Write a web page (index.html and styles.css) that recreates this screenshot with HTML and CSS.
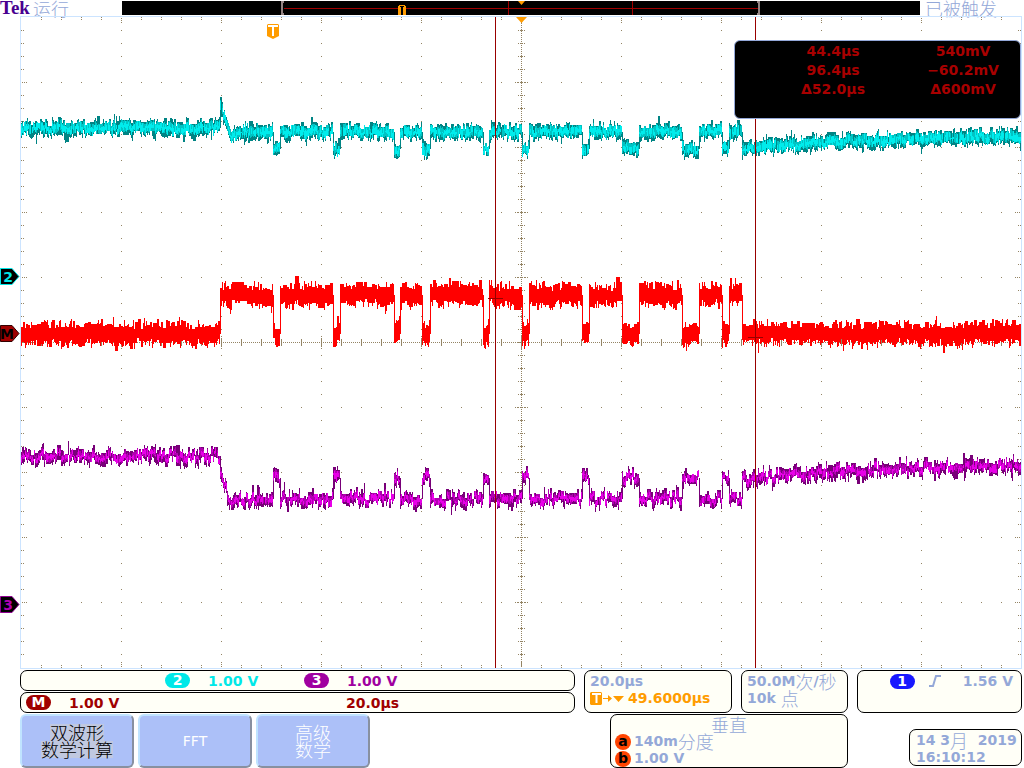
FILE: index.html
```html
<!DOCTYPE html>
<html lang="zh-CN">
  <head>
    <meta charset="UTF-8" />
    <meta name="viewport" content="width=device-width, initial-scale=1.0" />
    <title>Tek</title>
    <link rel="stylesheet" href="styles.css">
  </head>
  <body>
    <header class="topbar">
      <div class="status"><span class="brand">Tek</span><span class="cjk">运行</span></div>
      <svg class="record" viewBox="0 0 798 16">
        <rect x="0" y="1" width="798" height="14" fill="#000"/>
        <path d="M162 8.5H636M386.5 1V15M510.5 1V15" stroke="#a00000" fill="none"/>
        <path d="M162 2H160V14H162M635 2H637V14H635" stroke="#948484" stroke-width="2" fill="none"/>
        <path d="M396 1H403L399.500 5Z" fill="#ff9c00"/>
        <path d="M277 5H283V6H284V15H281V7H279V15H276V6H277Z" fill="#ff9c00"/>
        <path d="M278 6H282V7H278ZM279 7H281V15H279Z" fill="#000"/>
      </svg>
      <div class="trig-status cjk">已被触发</div>
    </header>

    <main class="screen">
      <svg id="plot" class="plot" viewBox="0 16 1024 653">
        <rect x="20.5" y="16.5" width="1001" height="652" fill="none" stroke="#cce4ff"/>
        <path id="grid" fill="#948464"/>
        <g id="waves"></g>
        <g id="cursors" fill="#980000">
          <rect x="495" y="17" width="1" height="651"/>
          <rect x="755" y="17" width="1" height="651"/>
          <rect x="488" y="298" width="15" height="1"/>
          <rect x="748" y="337" width="15" height="1"/>
        </g>
        <!-- trigger position -->
        <path d="M516 17H527L521.500 23Z" fill="#ff9c00"/>
        <path d="M268 24H278L279 25V36L275 38L273 39L271 38L267 36V25Z" fill="#ff9c00"/>
        <path d="M268 25H278V27H274V36H272V27H268Z" fill="#fff"/>
        <!-- channel markers -->
        <path d="M0.500 268.500H12L19 276.500L12 284.500H0.500Z" fill="#000" stroke="#00e8e8"/>
        <text class="marker" x="8" y="282" fill="#00e8e8">2</text>
        <path d="M0.500 325.500H12L19 333.500L12 341.500H0.500Z" fill="#a00000" stroke="#300"/>
        <text class="marker" x="7" y="339" fill="#000">M</text>
        <path d="M0.500 596.500H12L19 604.500L12 612.500H0.500Z" fill="#000" stroke="#900090"/>
        <text class="marker" x="8" y="610" fill="#b000b0">3</text>
      </svg>
      <div class="readout">
        <span>44.4µs</span><span>540mV</span>
        <span>96.4µs</span><span>−60.2mV</span>
        <span>Δ52.0µs</span><span>Δ600mV</span>
      </div>
    </main>

    <section class="info">
      <div class="channels">
        <div class="box scales">
          <div class="scale ch2"><b class="pill">2</b>1.00 V</div>
          <div class="scale ch3"><b class="pill">3</b>1.00 V</div>
        </div>
        <div class="box scales">
          <div class="scale math"><b class="pill">M</b>1.00 V</div>
          <div class="scale math time">20.0µs</div>
        </div>
      </div>
      <div class="box">
        <div class="line">20.0µs</div>
        <div class="line delay">
          <svg width="35" height="13" viewBox="0 0 35 13">
            <path d="M1 0H11L12 1V12L11 13H1L0 12V1Z" fill="#ff9c00"/>
            <path d="M2 1H11V3H7.500V11H5.500V3H2Z" fill="#fff"/>
            <path d="M13 6H18V3L22 6.500L18 10V7H13ZM23 4H34L28.500 10Z" fill="#ff9c00"/>
          </svg>
          49.6000µs
        </div>
      </div>
      <div class="box">
        <div class="line">50.0M<span class="cjk">次</span>/<span class="cjk">秒</span></div>
        <div class="line">10k&nbsp;<span class="cjk">点</span></div>
      </div>
      <div class="box trigger">
        <b class="pill">1</b>
        <svg width="12" height="12" viewBox="0 0 12 12"><path d="M0 11H4L7 1H12" fill="none" stroke="#94a8d8" stroke-width="2"/></svg>
        <span>1.56 V</span>
      </div>
    </section>

    <footer class="menu">
      <div class="softkeys">
        <button class="softkey active"><span>双波形</span><span>数学计算</span></button>
        <button class="softkey fft">FFT</button>
        <button class="softkey"><span>高级</span><span>数学</span></button>
      </div>
      <div class="box vertical">
        <div class="title cjk">垂直</div>
        <div class="line"><b class="knob">a</b>140m<span class="cjk">分度</span></div>
        <div class="line"><b class="knob">b</b>1.00 V</div>
      </div>
      <div class="box date">
        <div class="line">14 3<span class="cjk">月</span>&nbsp; 2019</div>
        <div class="line">16:10:12</div>
      </div>
    </footer>

    <script src="script.js"></script>
  </body>
</html>
```

FILE: styles.css
```css
body {
  margin: 0;
  background: #fff;
  color: #94a8d8;
  font-family: "DejaVu Sans", "Noto Sans CJK SC", sans-serif;
  font-size: 14px;
  font-weight: bold;
}
.cjk {
  font-family: "Noto Sans CJK SC", sans-serif;
  font-size: 18px;
  font-weight: 300;
}
svg {
  display: block;
}

/* top bar */
.topbar {
  display: grid;
  grid-template-columns: 122fr 798fr 104fr;
  height: 16px;
  line-height: 16px;
}
.status {
  display: flex;
  gap: 3px;
}
.brand {
  color: #480090;
  font-family: "Liberation Serif", serif;
  font-size: 19px;
}
.record {
  width: 100%;
}
.trig-status {
  padding-left: 5px;
  white-space: nowrap;
}

/* waveform area */
.screen {
  position: relative;
}
.plot {
  width: 100%;
  height: auto;
}
.marker {
  font-size: 14px;
  text-anchor: middle;
}
.readout {
  position: absolute;
  top: 24px;
  right: 3px;
  box-sizing: border-box;
  width: 287px;
  height: 79px;
  padding-top: 1px;
  border: 1px solid #94a8d8;
  border-radius: 6px;
  background: #000;
  color: #a80000;
  display: grid;
  grid-template-columns: 146px 114px;
  grid-auto-rows: 19px;
  justify-content: end;
  line-height: 19px;
  text-align: center;
}

/* info boxes */
.box {
  box-sizing: border-box;
  border: 1px solid #000;
  border-radius: 7px;
  background: #fffff7;
  padding: 2px 5px;
  white-space: nowrap;
}
.line {
  display: flex;
  align-items: center;
  height: 17px;
  line-height: 17px;
}
.info {
  display: grid;
  grid-template-columns: 555fr 148fr 107fr 165fr;
  gap: 9px;
  padding: 1px 2px 1px 20px;
}
.channels {
  display: grid;
  grid-template-rows: 21px 21px;
  gap: 1px;
}
.scales {
  display: grid;
  grid-template-columns: 139px 139px 139px;
  align-items: center;
  padding: 0 5px;
}
.scale {
  display: flex;
  align-items: center;
  gap: 18px;
}
.pill {
  width: 25px;
  height: 15px;
  border-radius: 8px;
  color: #fff;
  line-height: 15px;
  text-align: center;
}
.ch2 {
  grid-column: 2;
  color: #00e8e8;
}
.ch2 .pill {
  background: #00e8e8;
}
.ch3 {
  color: #a000a0;
}
.ch3 .pill {
  background: #a000a0;
}
.math {
  color: #a00000;
}
.math .pill {
  background: #a00000;
}
.time {
  grid-column: 3;
  padding-left: 42px;
}
.delay {
  color: #ff9c00;
  gap: 3px;
}
.trigger {
  display: flex;
  align-items: center;
  justify-content: flex-end;
  gap: 14px;
  padding: 0 8px 21px 0;
}
.trigger .pill {
  background: #1818ff;
}
.trigger span {
  padding-left: 8px;
}

/* bottom menu */
.menu {
  display: grid;
  grid-template-columns: 1fr 238px 113px;
  column-gap: 61px;
  align-items: center;
  padding: 0 2px 0 20px;
}
.softkeys {
  display: flex;
  gap: 4px;
}
.softkey {
  box-sizing: border-box;
  width: 114px;
  height: 54px;
  border: 2px solid;
  border-color: #c0e4ff #8890a0 #8890a0 #c0e4ff;
  border-radius: 6px;
  background: #acc0f8;
  color: #fff;
  display: flex;
  flex-direction: column;
  align-items: center;
  justify-content: center;
  font-family: "Noto Sans CJK SC", sans-serif;
  font-size: 18px;
  font-weight: 300;
  line-height: 17px;
}
.softkey.active span {
  background: #c0c8e0;
  color: #000;
}
.softkey.fft {
  font-family: "DejaVu Sans", sans-serif;
  font-size: 14px;
  font-weight: normal;
}
.vertical {
  height: 54px;
  padding: 0 4px;
}
.title {
  height: 18px;
  line-height: 18px;
  text-align: center;
}
.knob {
  width: 16px;
  height: 16px;
  margin-right: 3px;
  border-radius: 8px;
  background: #ff4400;
  color: #000;
  line-height: 15px;
  text-align: center;
}
.date {
  height: 37px;
  margin-top: 12px;
  padding: 2px 6px;
}
```

FILE: script.js
```js
const LEFT = 21, RIGHT = 1021, TOP = 17, BOTTOM = 667;
const MID_X = 521, MID_Y = 342;

// bus pulses inside the 220..742 frame
const pulses = [
  [273, 280], [333, 340], [394, 400], [422, 430], [483, 489], [522, 529],
  [582, 589], [622, 639], [682, 699], [722, 729],
];
const inFrame = (x) => x >= 220 && x < 742;
const inPulse = (x) => pulses.some(([a, b]) => x >= a && x < b);

// small seeded generator, so the noise is the same on every load
let seed = 7;
function rnd() {
  seed = (seed * 1664525 + 1013904223) % 4294967296;
  return seed / 4294967296;
}

function drawGrid() {
  let d = '';
  const dot = (x, y) => { d += `M${x} ${y}h1v1h-1z`; };

  for (let x = LEFT + 20; x < RIGHT; x += 20) {
    const div = (x - LEFT) % 100 === 0;
    (div ? [1, 3, 5] : [0, 2]).forEach((o) => {
      dot(x, TOP + o);
      dot(x, BOTTOM - o);
    });
    for (let y = TOP + 65; y < BOTTOM; y += 65) dot(x, y);
    for (let o = -3; o <= 3; o++) dot(x, MID_Y + o);
    if (div) [-6, -4, 4, 6].forEach((o) => dot(x, MID_Y + o));
  }
  for (let y = TOP + 13; y < BOTTOM; y += 13) {
    const div = (y - TOP) % 65 === 0;
    (div ? [1, 3, 5] : [0, 2]).forEach((o) => {
      dot(LEFT + o, y);
      dot(RIGHT - 1 - o, y);
    });
    for (let x = LEFT + 100; x < RIGHT; x += 100) dot(x, y);
    for (let o = -3; o <= 3; o++) if (o % 2 || !o) dot(MID_X + o, y);
    if (div) [-6, -4, 4, 6].forEach((o) => dot(MID_X + o, y));
  }
  for (let x = LEFT; x < RIGHT; x += 2) dot(x, MID_Y);
  for (let y = TOP; y < BOTTOM; y += 2) dot(MID_X, y);
  document.getElementById('grid').setAttribute('d', d);
}

function cyan(x) {
  if (x < 220) return 128;
  if (x < 223) return 108;
  if (x < 231) return 116 + (x - 223) * 3;
  if (x < 238) return 140 - (x - 231) * 1.5;
  if (inPulse(x)) return 149;
  if (x < 742) return 132;
  return 135 + 14 * Math.exp(-(x - 742) / 130);
}

function red(x) {
  return inFrame(x) && !inPulse(x) ? 295 : 334;
}

function purple(x) {
  if (x < 220) return 456;
  if (x < 231) return 470 + (x - 220) * 3.4;
  if (x < 238) return 507 - (x - 231) * 1.4;
  if (inPulse(x)) return 478;
  if (x < 742) return 499;
  return 463 + 17 * Math.exp(-(x - 742) / 140);
}

function drawWave(level, half, wander, colors) {
  const paths = colors.map(() => '');
  let prev = level(LEFT);
  let drift = 0;
  let up = 0, down = 0;
  for (let x = LEFT; x < RIGHT; x++) {
    const c = level(x);
    // samples come in short runs, so edges look stepped
    if (rnd() < 0.6) {
      drift = (rnd() - 0.5) * wander;
      up = rnd() * 5 + (rnd() < 0.1 ? rnd() * 7 : 0);
    }
    if (rnd() < 0.6) down = rnd() * 5 + (rnd() < 0.1 ? rnd() * 7 : 0);
    let top = c + drift - half - up;
    let bottom = c + drift + half + down;
    // join the columns across an edge
    if (Math.abs(c - prev) > 10) {
      top = Math.min(top, prev);
      bottom = Math.max(bottom, prev);
    }
    prev = c;
    const mid = c + drift;
    const bands = [
      [top, bottom],
      [Math.max(top, mid - half - rnd() * 3), Math.min(bottom, mid + half + rnd() * 3 - 1)],
      [mid - rnd() * half * 1.5, mid + rnd() * half * 1.5],
    ];
    colors.forEach((_, i) => {
      if (i > 0 && rnd() < 0.12) return;
      const y0 = Math.round(bands[i][0]);
      const y1 = Math.round(bands[i][1]);
      paths[i] += `M${x} ${y0}h1V${y1}h-1z`;
    });
  }
  const waves = document.getElementById('waves');
  paths.forEach((d, i) => {
    const p = document.createElementNS('http://www.w3.org/2000/svg', 'path');
    p.setAttribute('d', d);
    p.setAttribute('fill', colors[i]);
    waves.appendChild(p);
  });
}

drawGrid();
drawWave(cyan, 4, 5, ['#008484', '#00c4c4', '#00ecec']);
drawWave(red, 7, 7, ['#ff0000']);
drawWave(purple, 3, 9, ['#780078', '#b000b0', '#e800e8']);
// overshoot at the start of the frame
document.getElementById('waves').insertAdjacentHTML('beforeend', '<rect x="221" y="97" width="1" height="20" fill="#008080"/>');
```
